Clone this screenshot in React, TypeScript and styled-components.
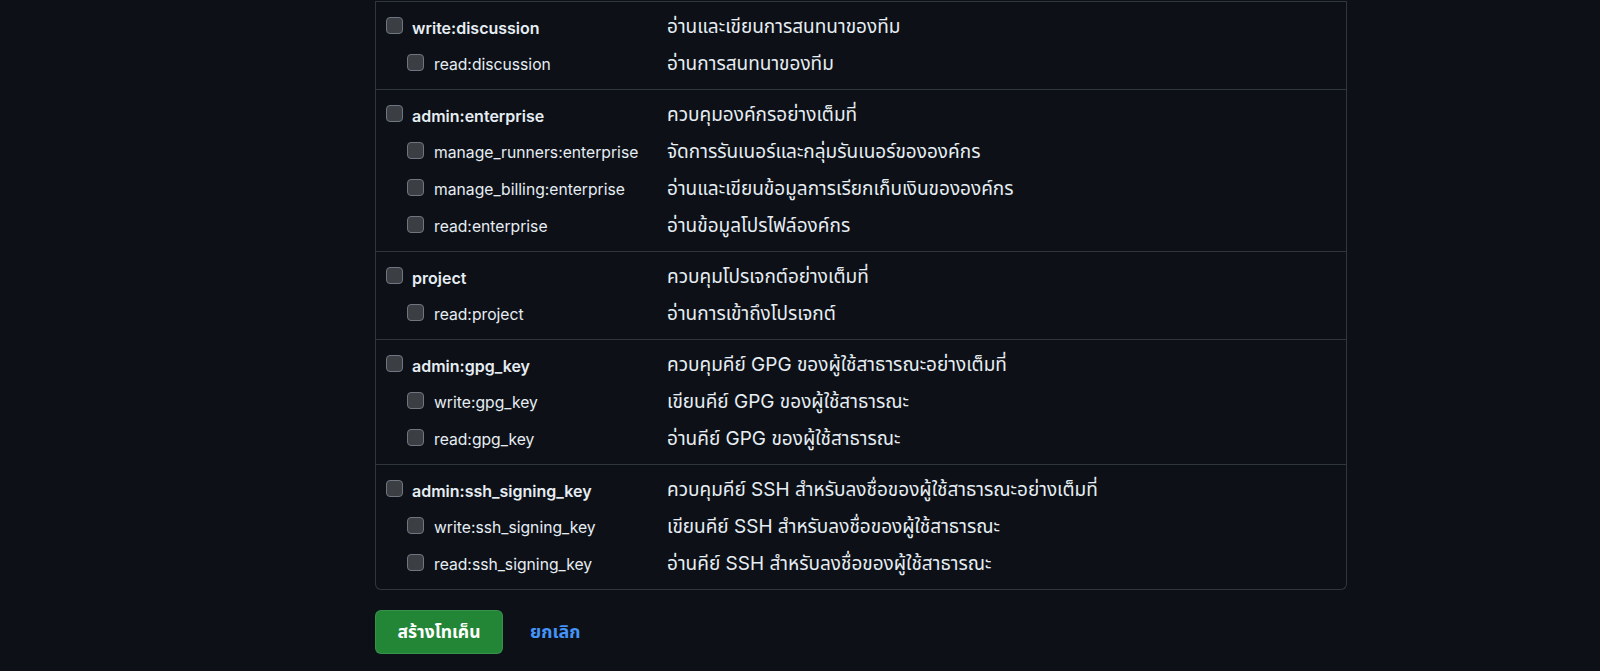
import styled, {createGlobalStyle} from "styled-components";

const GlobalStyle = createGlobalStyle`
  html, body {
    margin: 0;
    padding: 0;
    background: #0d1117;
    color: #e6edf3;
    font-family: Inter, "Noto Sans Thai", "Noto Sans", "DejaVu Sans", sans-serif;
  }
`

const Page = styled.main`
  padding: 1px 0 0 375px;
  width: 972px;
`

const ScopeBox = styled.div`
  border: 1px solid #30363d;
  border-top: none;
  border-radius: 0 0 6px 6px;
`

const Section = styled.div`
  border-top: 1px solid #30363d;
  padding: 7px 0 6px;
`

const Row = styled.label`
  display: flex;
  align-items: center;
  height: 37px;
  padding-left: 10px;
`

const LabelCell = styled.div<{ $sub?: boolean }>`
  display: flex;
  align-items: center;
  gap: ${p => (p.$sub ? "10px" : "9px")};
  width: 281px;
  flex-shrink: 0;
  padding-left: ${p => (p.$sub ? "21px" : "0")};
  box-sizing: border-box;
  font-size: ${p => (p.$sub ? "15.7px" : "16px")};
  font-weight: ${p => (p.$sub ? 400 : 600)};
  white-space: nowrap;
`

const Check = styled.span`
  width: 17px;
  height: 17px;
  box-sizing: border-box;
  margin-top: -4px;
  border: 1.5px solid #6e7681;
  border-radius: 4px;
  background: #3b3e43;
  flex-shrink: 0;
`

const Desc = styled.div`
  font-size: 19px;
  white-space: nowrap;
`

const Actions = styled.div`
  display: flex;
  align-items: center;
  gap: 27px;
  margin-top: 20px;
`

const PrimaryButton = styled.button`
  height: 44px;
  width: 128px;
  border-radius: 6px;
  border: 1px solid rgba(240, 246, 252, 0.1);
  background: #238636;
  color: #ffffff;
  font-family: inherit;
  font-size: 17.5px;
  font-weight: 700;
  cursor: pointer;
`

const CancelLink = styled.a`
  color: #4493f8;
  font-size: 18px;
  font-weight: 700;
  text-decoration: none;
`

type Scope = { name: string; desc: string; sub?: boolean }

const groups: Scope[][] = [
  [
    {name: "write:discussion", desc: "อ่านและเขียนการสนทนาของทีม"},
    {name: "read:discussion", desc: "อ่านการสนทนาของทีม", sub: true},
  ],
  [
    {name: "admin:enterprise", desc: "ควบคุมองค์กรอย่างเต็มที่"},
    {name: "manage_runners:enterprise", desc: "จัดการรันเนอร์และกลุ่มรันเนอร์ขององค์กร", sub: true},
    {name: "manage_billing:enterprise", desc: "อ่านและเขียนข้อมูลการเรียกเก็บเงินขององค์กร", sub: true},
    {name: "read:enterprise", desc: "อ่านข้อมูลโปรไฟล์องค์กร", sub: true},
  ],
  [
    {name: "project", desc: "ควบคุมโปรเจกต์อย่างเต็มที่"},
    {name: "read:project", desc: "อ่านการเข้าถึงโปรเจกต์", sub: true},
  ],
  [
    {name: "admin:gpg_key", desc: "ควบคุมคีย์ GPG ของผู้ใช้สาธารณะอย่างเต็มที่"},
    {name: "write:gpg_key", desc: "เขียนคีย์ GPG ของผู้ใช้สาธารณะ", sub: true},
    {name: "read:gpg_key", desc: "อ่านคีย์ GPG ของผู้ใช้สาธารณะ", sub: true},
  ],
  [
    {name: "admin:ssh_signing_key", desc: "ควบคุมคีย์ SSH สำหรับลงชื่อของผู้ใช้สาธารณะอย่างเต็มที่"},
    {name: "write:ssh_signing_key", desc: "เขียนคีย์ SSH สำหรับลงชื่อของผู้ใช้สาธารณะ", sub: true},
    {name: "read:ssh_signing_key", desc: "อ่านคีย์ SSH สำหรับลงชื่อของผู้ใช้สาธารณะ", sub: true},
  ],
]

export default function App() {
  return (
    <>
      <GlobalStyle/>
      <Page>
        <ScopeBox>
          {groups.map((group, i) => (
            <Section key={i}>
              {group.map(scope => (
                <Row key={scope.name}>
                  <LabelCell $sub={scope.sub}>
                    <Check/>
                    {scope.name}
                  </LabelCell>
                  <Desc>{scope.desc}</Desc>
                </Row>
              ))}
            </Section>
          ))}
        </ScopeBox>
        <Actions>
          <PrimaryButton>สร้างโทเค็น</PrimaryButton>
          <CancelLink href="#">ยกเลิก</CancelLink>
        </Actions>
      </Page>
    </>
  );
}
